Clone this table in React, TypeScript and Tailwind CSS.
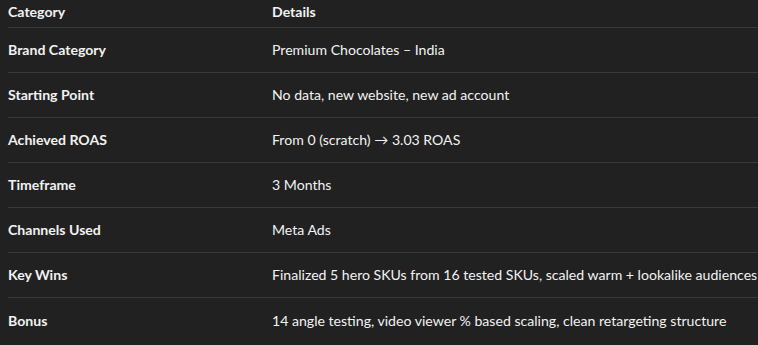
const rows: [string, string][] = [
  ["Brand Category", "Premium Chocolates – India"],
  ["Starting Point", "No data, new website, new ad account"],
  ["Achieved ROAS", "From 0 (scratch) → 3.03 ROAS"],
  ["Timeframe", "3 Months"],
  ["Channels Used", "Meta Ads"],
  ["Key Wins", "Finalized 5 hero SKUs from 16 tested SKUs, scaled warm + lookalike audiences"],
  ["Bonus", "14 angle testing, video viewer % based scaling, clean retargeting structure"],
];

export default function App() {
  return (
    <div className="h-[345px] w-[758px] overflow-hidden bg-[#212121] pl-2 font-['Lato',sans-serif] text-[14.1px] text-[#f2f2f2]">
      <div className="grid h-[28px] grid-cols-[264px_1fr] items-center border-b border-[#3a3a3a] pb-1 font-bold">
        <div>Category</div>
        <div>Details</div>
      </div>
      {rows.map(([label, detail], i) => (
        <div
          key={label}
          className={`grid h-[45px] grid-cols-[264px_1fr] items-center whitespace-nowrap ${
            i < rows.length - 1 ? "border-b border-[#3a3a3a]" : ""
          }`}
        >
          <div className="font-bold">{label}</div>
          <div>{detail}</div>
        </div>
      ))}
    </div>
  );
}
